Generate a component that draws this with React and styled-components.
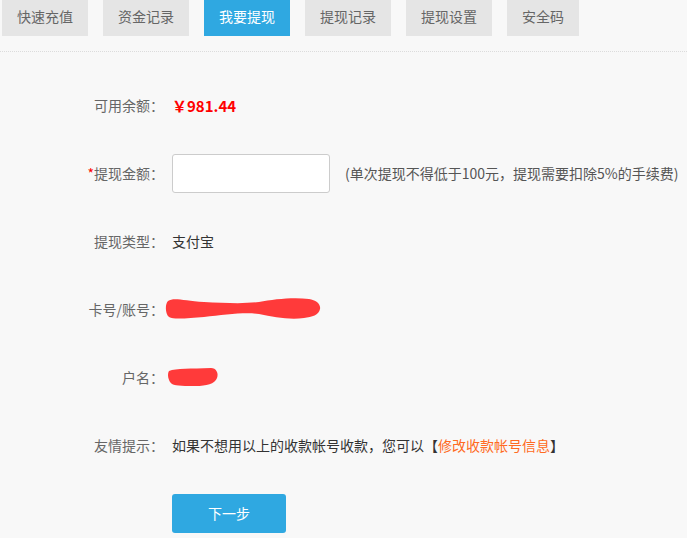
import styled, { createGlobalStyle } from "styled-components";

const GlobalStyle = createGlobalStyle`
  html, body {
    margin: 0;
    padding: 0;
    background: #f8f8f8;
    font-family: "Noto Sans CJK SC", "Noto Sans", sans-serif;
  }
`;

const tabs = ["快速充值", "资金记录", "我要提现", "提现记录", "提现设置", "安全码"];

const App = () => {
  return (
    <>
      <GlobalStyle />
      <Page>
        <TabBar>
          {tabs.map((t) => (
            <Tab key={t} $active={t === "我要提现"}>
              {t}
            </Tab>
          ))}
        </TabBar>
        <Form>
          <Row>
            <Label>可用余额：</Label>
            <Balance>￥981.44</Balance>
          </Row>
          <Row>
            <Label>
              <Star>*</Star>提现金额：
            </Label>
            <Input type="text" />
            <Hint>(单次提现不得低于100元，提现需要扣除5%的手续费)</Hint>
          </Row>
          <Row>
            <Label>提现类型：</Label>
            <Value>支付宝</Value>
          </Row>
          <Row>
            <Label>卡号/账号：</Label>
            <Scribble width="158" height="28" viewBox="0 0 158 28" $shift={-8}>
              <path
                d="M4,6 C10,2 20,6 40,7 C60,8 80,9 95,7 C110,4 130,2 145,4 C152,5 157,9 156,14 C155,20 148,22 140,23 C125,25 110,22 95,19 C80,17 60,20 40,22 C25,23 10,25 5,22 C1,19 1,9 4,6 Z"
                fill="#ff3a3a"
              />
            </Scribble>
          </Row>
          <Row>
            <Label>户名：</Label>
            <Scribble width="54" height="24" viewBox="0 0 54 24" $shift={-6}>
              <path
                d="M3,6 C10,3 25,4 45,3 C50,3 53,8 51,13 C49,19 40,21 30,21 C20,21 10,21 6,19 C2,16 1,9 3,6 Z"
                fill="#ff3a3a"
              />
            </Scribble>
          </Row>
          <Row>
            <Label>友情提示：</Label>
            <Value>
              如果不想用以上的收款帐号收款，您可以【<Link>修改收款帐号信息</Link>】
            </Value>
          </Row>
          <Row>
            <Label />
            <Button>下一步</Button>
          </Row>
        </Form>
      </Page>
    </>
  );
};

const Page = styled.div`
  width: 687px;
  height: 538px;
  overflow: hidden;
`;

const TabBar = styled.div`
  display: flex;
  gap: 15px;
  padding-left: 2px;
  padding-bottom: 15px;
  border-bottom: 1px dotted #dcdcdc;
`;

const Tab = styled.div`
  height: 36px;
  line-height: 33px;
  padding: 0 15px;
  font-size: 14px;
  color: ${(p) => (p.$active ? "#fff" : "#666")};
  background: ${(p) => (p.$active ? "#2fa8e1" : "#e5e5e5")};
`;

const Form = styled.div`
  display: flex;
  flex-direction: column;
  gap: 28px;
  padding-top: 33px;
`;

const Row = styled.div`
  display: flex;
  align-items: center;
  height: 40px;
`;

const Label = styled.div`
  width: 164px;
  flex-shrink: 0;
  text-align: right;
  font-size: 14px;
  color: #666;
  margin-right: 8px;
`;

const Star = styled.span`
  color: #f00;
`;

const Balance = styled.div`
  color: #f00;
  font-size: 15px;
  font-weight: bold;
`;

const Value = styled.div`
  font-size: 14px;
  color: #333;
`;

const Link = styled.span`
  color: #ff6a22;
`;

const Hint = styled.div`
  font-size: 14px;
  color: #555;
  margin-left: 15px;
  white-space: nowrap;
`;

const Input = styled.input`
  box-sizing: border-box;
  width: 158px;
  height: 39px;
  border: 1px solid #ccc;
  border-radius: 3px;
  background: #fff;
  outline: none;
`;

const Scribble = styled.svg`
  display: block;
  margin-left: ${(p) => p.$shift}px;
`;

const Button = styled.button`
  width: 114px;
  height: 39px;
  border: none;
  border-radius: 3px;
  background: #2fa8e1;
  color: #fff;
  font-family: inherit;
  font-size: 14px;
  cursor: pointer;
`;

export default App;
